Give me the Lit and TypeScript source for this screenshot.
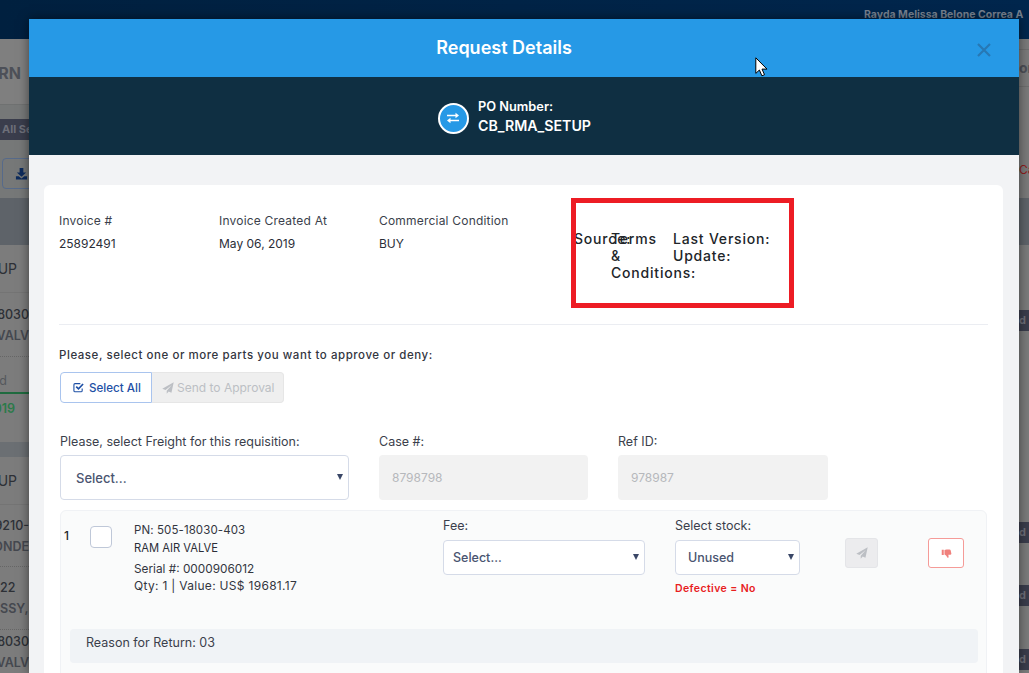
import { css, html, LitElement } from "lit";
import { customElement } from "lit/decorators.js";

const plane = html`<svg viewBox="0 0 16 16" width="12" height="12"><path fill="currentColor" d="M15.6.3.4 9l4.3 1.8L13 4 6.3 11.5V15.6l2.6-3 3.7 1.600z"/></svg>`;

// dimmed page behind the modal, only its two edges stay visible
const LEFT_ROWS = [
	{ h: 65, cls: "title", text: "RN" },
	{ h: 94, cls: "tools", text: "" },
	{ h: 47, cls: "thead", text: "" },
	{ h: 48, cls: "cell line", text: "UP" },
	{ h: 64, cls: "cell two dotted", text: "18030|VALV" },
	{ h: 37, cls: "cell status", text: "ed" },
	{ h: 48, cls: "cell date", text: "019" },
	{ h: 15, cls: "band", text: "" },
	{ h: 48, cls: "cell line", text: "UP" },
	{ h: 62, cls: "cell two dotted", text: "9210-|ONDE" },
	{ h: 63, cls: "cell two dotted left", text: "22|SSY," },
	{ h: 43, cls: "cell two", text: "18030|VALV" },
];

const RIGHT_CHIPS = [271, 483, 546, 610];

@customElement("app-root")
export class AppRoot extends LitElement {
	static override styles = css`
		:host {
			display: block;
			position: relative;
			width: 1029px;
			height: 673px;
			overflow: hidden;
			font-family: Inter, "Liberation Sans", sans-serif;
			color: #212529;
			background: #7d7e7e;
		}

		.nav {
			height: 39px;
			background: linear-gradient(90deg, #00203f, #00264d);
			display: flex;
			justify-content: flex-end;
			overflow: hidden;
		}
		.user {
			width: 165px;
			padding-top: 8px;
			font-size: 10.5px;
			font-weight: 700;
			color: #77818f;
			white-space: nowrap;
		}

		.page {
			display: flex;
			justify-content: space-between;
			height: 634px;
		}
		.edge {
			width: 29px;
			overflow: hidden;
			display: flex;
			flex-direction: column;
		}
		.row {
			flex: none;
			display: flex;
			flex-direction: column;
			justify-content: center;
			align-items: flex-end;
			white-space: nowrap;
			font-size: 12.5px;
			color: #2d3036;
			box-sizing: border-box;
		}
		.row.title {
			background: #7f7f7f;
			font-size: 16px;
			font-weight: 700;
			color: #4d5058;
			padding-right: 8px;
			padding-top: 3px;
		}
		.row.tools {
			background: #767878;
			border-top: 1px solid #6f7171;
			justify-content: flex-start;
			align-items: stretch;
			padding-top: 14px;
		}
		.chip {
			height: 21px;
			background: #3a3d4c;
			color: #6d6f79;
			font-size: 11px;
			font-weight: 700;
			line-height: 21px;
			padding-left: 2px;
		}
		.dl {
			margin: 18px 0 0 2px;
			height: 31px;
			width: 40px;
			border: 1px solid #566a8a;
			border-radius: 4px;
			box-sizing: border-box;
			display: flex;
			align-items: center;
			padding-left: 12px;
			color: #0d2b5c;
		}
		.row.thead {
			background: #5e6369;
		}
		.row.cell {
			background: #7c7c7c;
			font-size: 12.5px;
		}
		.row.line {
			border-bottom: 1px solid #747474;
			padding-right: 12px;
			font-size: 14px;
		}
		.row.two {
			gap: 6px;
			font-weight: 500;
		}
		.row.two.left {
			align-items: flex-start;
		}
		.row.two span + span {
			font-weight: 600;
			color: #45484f;
		}
		.row.dotted {
			border-bottom: 1px dotted #666;
		}
		.row.status {
			align-items: flex-start;
			padding-top: 11px;
			color: #55585c;
			border-bottom: 2px solid #1f6b3f;
		}
		.row.status span {
			margin-left: -8px;
		}
		.row.date {
			justify-content: flex-start;
			padding: 7px 14px 0 0;
			font-weight: 600;
			color: #2b7a4a;
		}
		.row.band {
			background: #6b6f73;
		}

		.right {
			width: 10px;
			position: relative;
			overflow: hidden;
			background: #7a7b7b;
		}
		.right-head {
			height: 159px;
			box-sizing: border-box;
			padding-top: 10px;
			background: #7a7a7a;
			font-size: 14px;
		}
		.right-head b {
			display: block;
			height: 38px;
			box-sizing: border-box;
			border-top: 1px solid #6e6e6e;
			border-bottom: 1px solid #6e6e6e;
			padding-top: 10px;
			line-height: 16px;
			color: #4d5058;
			white-space: nowrap;
		}
		.right-head i {
			display: block;
			margin-top: 75px;
			line-height: 16px;
			font-style: normal;
			font-size: 12px;
			color: #8f1d1d;
			white-space: nowrap;
		}
		.right-band {
			height: 47px;
			background: #5e6369;
		}
		.right-chip {
			position: absolute;
			left: 0;
			width: 10px;
			height: 21px;
			background: #3a3d4c;
			color: #6d6f79;
			font-size: 11px;
			font-weight: 700;
			line-height: 21px;
		}

		.modal {
			position: absolute;
			left: 29px;
			top: 19px;
			width: 990px;
			height: 654px;
			background: #f2f3f5;
			box-shadow: 0 0 10px rgba(0, 0, 0, 0.5);
			overflow: hidden;
		}
		.m-head {
			height: 58px;
			box-sizing: border-box;
			padding: 0 40px 2px 0;
			background: #2699e6;
			display: flex;
			align-items: center;
			justify-content: center;
			position: relative;
			color: #fff;
			font-size: 18px;
			font-weight: 600;
		}
		.close {
			position: absolute;
			left: 947px;
			top: 23px;
			color: #2778b4;
			display: block;
		}
		.m-po {
			height: 78px;
			background: #0f2f42;
			display: flex;
			align-items: center;
			justify-content: center;
			gap: 9px;
			color: #fff;
			font-weight: 600;
			padding-right: 19px;
			box-sizing: border-box;
		}
		.po-icon {
			width: 31px;
			height: 31px;
			box-sizing: border-box;
			border-radius: 50%;
			background: #2699e6;
			border: 2px solid #fff;
			display: flex;
			align-items: center;
			justify-content: center;
			margin-top: 4px;
		}
		.po-text {
			display: grid;
			gap: 2px;
			line-height: 17px;
			margin-top: -1px;
			font-size: 12.8px;
		}
		.po-text span + span {
			font-size: 14.2px;
		}

		.card {
			margin: 30px 16px 0 15px;
			background: #fff;
			border-radius: 6px;
			padding: 15px 15px 0;
			height: 600px;
			box-sizing: border-box;
			position: relative;
		}
		.info {
			display: flex;
			height: 124px;
			border-bottom: 1px solid #ebedf2;
			font-size: 12px;
			color: #3b3f4c;
		}
		.info-col {
			width: 160px;
			flex: none;
			display: grid;
			align-content: start;
			gap: 8px;
			line-height: 15px;
			padding-top: 13px;
			letter-spacing: 0.2px;
		}
		.info-col span + span {
			color: #2b2e38;
			letter-spacing: 0;
		}
		.bad {
			display: flex;
			margin-left: 35px;
			padding-top: 30px;
			font-size: 14px;
			font-weight: 500;
			line-height: 17px;
			color: #212529;
			letter-spacing: 0.8px;
		}
		.bad div {
			flex: none;
		}
		.bad .src {
			width: 37px;
			white-space: nowrap;
		}
		.bad .terms {
			width: 62px;
			white-space: nowrap;
		}
		.bad .last {
			width: 110px;
		}
		.redbox {
			position: absolute;
			left: 527px;
			top: 13px;
			width: 223px;
			height: 110px;
			box-sizing: border-box;
			border: 5px solid #ed1c24;
		}

		.hint {
			margin-top: 23px;
			font-size: 11.5px;
			font-weight: 500;
			line-height: 14px;
			letter-spacing: 0.55px;
			color: #33363f;
		}
		.btns {
			display: flex;
			margin-top: 10px;
			height: 31px;
			margin-left: 1px;
			font-size: 12px;
		}
		.btns div {
			display: flex;
			align-items: center;
			box-sizing: border-box;
		}
		.sel-all {
			width: 92px;
			gap: 5px;
			padding-left: 12px;
			border: 1px solid #a9c4ee;
			border-radius: 4px 0 0 4px;
			color: #1d4fa5;
			font-size: 11.6px;
			font-weight: 500;
		}
		.send {
			width: 132px;
			gap: 3px;
			padding-left: 10px;
			background: #efefef;
			border: 1px solid #e6e6e6;
			border-left: 0;
			border-radius: 0 4px 4px 0;
			color: #bcbfc4;
		}

		.fields {
			display: grid;
			grid-template-columns: 289px 209px 210px;
			column-gap: 30px;
			margin: 31px 0 0 1px;
			font-size: 12.5px;
			color: #3b3f4c;
		}
		.fields label {
			display: block;
			line-height: 15px;
			margin-bottom: 6px;
		}
		.sel {
			position: relative;
			display: flex;
			align-items: center;
			box-sizing: border-box;
			height: 45px;
			border: 1px solid #d5dbe8;
			border-radius: 4px;
			padding-left: 15px;
			background: #fff;
			color: #4a5470;
			font-size: 13px;
			font-weight: 500;
		}
		.sel::after {
			content: "";
			position: absolute;
			right: 5px;
			top: 50%;
			margin-top: -4px;
			border: 3.5px solid transparent;
			border-top: 6px solid #3a4767;
			border-bottom: 0;
		}
		.ro {
			display: flex;
			align-items: center;
			box-sizing: border-box;
			height: 45px;
			border-radius: 4px;
			padding-left: 13px;
			background: #f2f2f2;
			color: #b6b8bc;
			font-size: 12px;
		}

		.part {
			margin: 10px 1px 0 1px;
			height: 170px;
			background: #fafbfb;
			border: 1px solid #f0f2f5;
			border-radius: 6px;
			box-sizing: border-box;
			font-size: 12px;
			color: #3b3f4c;
		}
		.part-top {
			display: grid;
			grid-template-columns: 26px 44px 309px 232px 170px 83px 36px;
			height: 118px;
			padding-left: 3px;
		}
		.num {
			font-weight: 500;
			color: #212529;
			padding-top: 17px;
			line-height: 15px;
		}
		.check {
			width: 22px;
			height: 22px;
			margin-top: 15px;
			box-sizing: border-box;
			background: #fff;
			border: 1px solid #bfc8d8;
			border-radius: 4px;
		}
		.desc {
			padding-top: 11px;
			font-size: 11.8px;
			color: #33363f;
			line-height: 17px;
		}
		.desc .pn {
			font-size: 11.5px;
			letter-spacing: 0.1px;
			margin-bottom: 1px;
		}
		.desc .name {
			font-size: 11.2px;
			margin-bottom: 4px;
			color: #2b2e38;
		}
		.desc .qty {
			font-size: 12px;
			letter-spacing: 0.3px;
			margin-top: -1px;
		}
		.picker {
			padding-top: 7px;
		}
		.picker label {
			display: block;
			line-height: 15px;
			font-size: 12.5px;
			margin-bottom: 7px;
		}
		.picker .sel {
			height: 35px;
			padding-left: 9px;
			font-size: 12.5px;
		}
		.fee .sel {
			width: 202px;
		}
		.stock .sel {
			width: 125px;
			padding-left: 12px;
		}
		.defective {
			margin-top: 7px;
			font-size: 10.5px;
			font-weight: 600;
			line-height: 14px;
			color: #e8201e;
			letter-spacing: 0.4px;
		}
		.act {
			height: 30px;
			box-sizing: border-box;
			border-radius: 3px;
			margin-top: 27px;
			display: flex;
			align-items: center;
			justify-content: center;
		}
		.act.go {
			width: 33px;
			background: #ececee;
			border: 1px solid #e4e5e8;
			color: #bcbfc4;
		}
		.act.no {
			width: 36px;
			background: #fff;
			border: 1px solid #f59b98;
			color: #f0807c;
		}
		.reason {
			margin: 0 8px 0 9px;
			height: 34px;
			box-sizing: border-box;
			padding: 6px 16px;
			background: #f0f3f6;
			border-radius: 4px;
			font-size: 12.5px;
			line-height: 15px;
			color: #3b3f4c;
		}

		.cursor {
			position: absolute;
			left: 755px;
			top: 57px;
		}
	`;

	private renderRow(r: (typeof LEFT_ROWS)[number]) {
		if (r.cls === "tools") {
			return html`<div class="row tools" style="height:${r.h}px">
				<div class="chip">All Se</div>
				<div class="dl">
					<svg viewBox="0 0 14 14" width="13" height="13"><path fill="currentColor" d="M5 1h4v5h3L7 10.500 2 6h3zM1 10h3l3 2.500L10 10h3v3.500H1z"/></svg>
				</div>
			</div>`;
		}
		return html`<div class="row ${r.cls}" style="height:${r.h}px">
			${r.text.split("|").map((t) => html`<span>${t}</span>`)}
		</div>`;
	}

	override render() {
		return html`
			<div class="nav"><div class="user">Rayda Melissa Belone Correa A</div></div>
			<div class="page">
				<div class="edge">${LEFT_ROWS.map((r) => this.renderRow(r))}</div>
				<div class="right">
					<div class="right-head"><b>or</b><i>Ca</i></div>
					<div class="right-band"></div>
					${RIGHT_CHIPS.map(
						(y) => html`<div class="right-chip" style="top:${y}px">d</div>`,
					)}
				</div>
			</div>

			<div class="modal">
				<div class="m-head">
					Request Details
					<svg class="close" viewBox="0 0 16 16" width="16" height="16"><path fill="none" stroke="currentColor" stroke-width="2.200" d="M2 2l12 12M14 2 2 14"/></svg>
				</div>
				<div class="m-po">
					<div class="po-icon">
						<svg viewBox="0 0 14 12" width="14" height="12"><path fill="#fff" d="M1 2.800h8.500V.8L13 3.600 9.500 6.300v-2H1zM13 7.800H4.500v-2L1 8.500l3.500 2.800v-2H13z"/></svg>
					</div>
					<div class="po-text"><span>PO Number:</span><span>CB_RMA_SETUP</span></div>
				</div>

				<div class="card">
					<div class="info">
						<div class="info-col"><span>Invoice #</span><span>25892491</span></div>
						<div class="info-col"><span>Invoice Created At</span><span>May 06, 2019</span></div>
						<div class="info-col"><span>Commercial Condition</span><span>BUY</span></div>
						<div class="bad">
							<div class="src">Source:</div>
							<div class="terms">Terms<br />&amp;<br />Conditions:</div>
							<div class="last">Last Version:<br />Update:</div>
						</div>
					</div>
					<div class="redbox"></div>

					<div class="hint">Please, select one or more parts you want to approve or deny:</div>
					<div class="btns">
						<div class="sel-all">
							<svg viewBox="0 0 12 12" width="11" height="11"><path fill="none" stroke="currentColor" stroke-width="1.200" d="M10 7v2.500a1.200 1.200 0 0 1-1.200 1.200H2.200A1.200 1.200 0 0 1 1 9.500V3a1.200 1.200 0 0 1 1.200-1.200H8"/><path fill="none" stroke="currentColor" stroke-width="1.800" d="M3.500 5 6 7.500 11 2.200"/></svg>
							Select All
						</div>
						<div class="send">${plane} Send to Approval</div>
					</div>

					<div class="fields">
						<div>
							<label>Please, select Freight for this requisition:</label>
							<div class="sel">Select...</div>
						</div>
						<div>
							<label>Case #:</label>
							<div class="ro">8798798</div>
						</div>
						<div>
							<label>Ref ID:</label>
							<div class="ro">978987</div>
						</div>
					</div>

					<div class="part">
						<div class="part-top">
							<div class="num">1</div>
							<div class="check"></div>
							<div class="desc">
								<div class="pn">PN: 505-18030-403</div>
								<div class="name">RAM AIR VALVE</div>
								<div>Serial #: 0000906012</div>
								<div class="qty">Qty: 1 | Value: US$ 19681.17</div>
							</div>
							<div class="picker fee">
								<label>Fee:</label>
								<div class="sel">Select...</div>
							</div>
							<div class="picker stock">
								<label>Select stock:</label>
								<div class="sel">Unused</div>
								<div class="defective">Defective = No</div>
							</div>
							<div><div class="act go">${plane}</div></div>
							<div>
								<div class="act no">
									<svg viewBox="0 0 12 12" width="11" height="11"><path fill="currentColor" d="M.8 2h2.200v5.500H.8zM3.800 2.200 6 1.500h3.200c.8 0 1.200.4 1.300 1l.8 3.600c.1.700-.3 1.200-1 1.200H8l.3 2.200c.1.800-.3 1.300-.9 1.300L5.500 8.200 3.800 7z"/></svg>
								</div>
							</div>
						</div>
						<div class="reason">Reason for Return: 03</div>
					</div>
				</div>
			</div>

			<svg class="cursor" viewBox="0 0 13 20" width="13" height="20"><path fill="#fff" stroke="#000" stroke-width="1" d="M.8.800v15.600l3.600-3.400 2.500 5.800 2.600-1.100L7 12.100h5z"/></svg>
		`;
	}
}

declare global {
	interface HTMLElementTagNameMap {
		"app-root": AppRoot;
	}
}
